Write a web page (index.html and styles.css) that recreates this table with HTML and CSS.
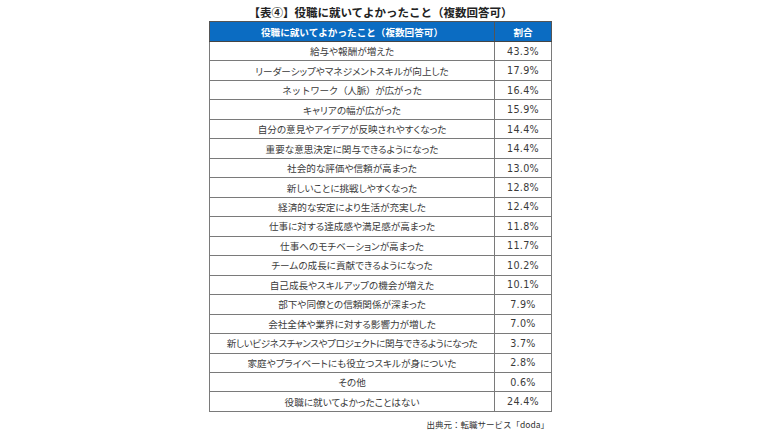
FILE: index.html
```html
<!DOCTYPE html>
<html lang="ja">
<head>
<meta charset="utf-8">
<link rel="stylesheet" href="styles.css">
</head>
<body>
<div class="wrap">
  <div class="title">【表④】役職に就いてよかったこと（複数回答可）</div>
  <table class="tbl">
    <thead>
      <tr><th class="c1">役職に就いてよかったこと（複数回答可）</th><th class="c2">割合</th></tr>
    </thead>
    <tbody>
      <tr><td class="c1">給与や報酬が増えた</td><td class="c2">43.3%</td></tr>
      <tr><td class="c1">リーダーシップやマネジメントスキルが向上した</td><td class="c2">17.9%</td></tr>
      <tr><td class="c1 fw">ネットワーク（人脈）が広がった</td><td class="c2">16.4%</td></tr>
      <tr><td class="c1">キャリアの幅が広がった</td><td class="c2">15.9%</td></tr>
      <tr><td class="c1">自分の意見やアイデアが反映されやすくなった</td><td class="c2">14.4%</td></tr>
      <tr><td class="c1">重要な意思決定に関与できるようになった</td><td class="c2">14.4%</td></tr>
      <tr><td class="c1">社会的な評価や信頼が高まった</td><td class="c2">13.0%</td></tr>
      <tr><td class="c1">新しいことに挑戦しやすくなった</td><td class="c2">12.8%</td></tr>
      <tr><td class="c1">経済的な安定により生活が充実した</td><td class="c2">12.4%</td></tr>
      <tr><td class="c1">仕事に対する達成感や満足感が高まった</td><td class="c2">11.8%</td></tr>
      <tr><td class="c1">仕事へのモチベーションが高まった</td><td class="c2">11.7%</td></tr>
      <tr><td class="c1">チームの成長に貢献できるようになった</td><td class="c2">10.2%</td></tr>
      <tr><td class="c1">自己成長やスキルアップの機会が増えた</td><td class="c2">10.1%</td></tr>
      <tr><td class="c1">部下や同僚との信頼関係が深まった</td><td class="c2">7.9%</td></tr>
      <tr><td class="c1">会社全体や業界に対する影響力が増した</td><td class="c2">7.0%</td></tr>
      <tr><td class="c1 tight">新しいビジネスチャンスやプロジェクトに関与できるようになった</td><td class="c2">3.7%</td></tr>
      <tr><td class="c1">家庭やプライベートにも役立つスキルが身についた</td><td class="c2">2.8%</td></tr>
      <tr><td class="c1">その他</td><td class="c2">0.6%</td></tr>
      <tr><td class="c1">役職に就いてよかったことはない</td><td class="c2">24.4%</td></tr>
    </tbody>
  </table>
  <div class="source">出典元：転職サービス「doda」</div>
</div>
</body>
</html>
```
FILE: styles.css
```css
html, body {
  margin: 0;
  padding: 0;
  background: #ffffff;
}
body {
  width: 770px;
  height: 433px;
  overflow: hidden;
  font-family: "Noto Sans CJK JP", sans-serif;
  color: #333333;
}
.wrap {
  width: 343px;
  margin-left: 209px;
  padding-top: 4px;
}
.title {
  text-align: center;
  font-size: 11.5px;
  font-weight: bold;
  color: #222222;
  line-height: 17px;
}
.tbl {
  width: 343px;
  border-collapse: collapse;
  table-layout: fixed;
  border: 1px solid #555555;
}
.tbl th, .tbl td {
  padding: 0;
  text-align: center;
  font-size: 9.6px;
  white-space: nowrap;
  overflow: hidden;
}
.tbl th {
  background: #0b6cc2;
  color: #ffffff;
  font-weight: bold;
  height: 19px;
  border: 1px solid #555555;
  border-bottom: 1px solid #444444;
}
.tbl td {
  height: 18.47px;
  border: 1px solid #7a7a7a;
  color: #3a3a3a;
}
.tbl td.c1 {
  font-feature-settings: "palt";
}
.tbl td.fw {
  font-feature-settings: normal;
  letter-spacing: -0.3px;
}
.tbl td.tight {
  letter-spacing: -0.4px;
}
.tbl th.c1, .tbl td.c1 {
  width: 284px;
}
.tbl td.c2 {
  font-family: "DejaVu Sans", sans-serif;
  font-size: 9.6px;
  letter-spacing: 0.3px;
}
.source {
  text-align: right;
  font-size: 8.5px;
  line-height: 14px;
  padding-top: 5px;
  padding-right: 3px;
  color: #333333;
}
```
